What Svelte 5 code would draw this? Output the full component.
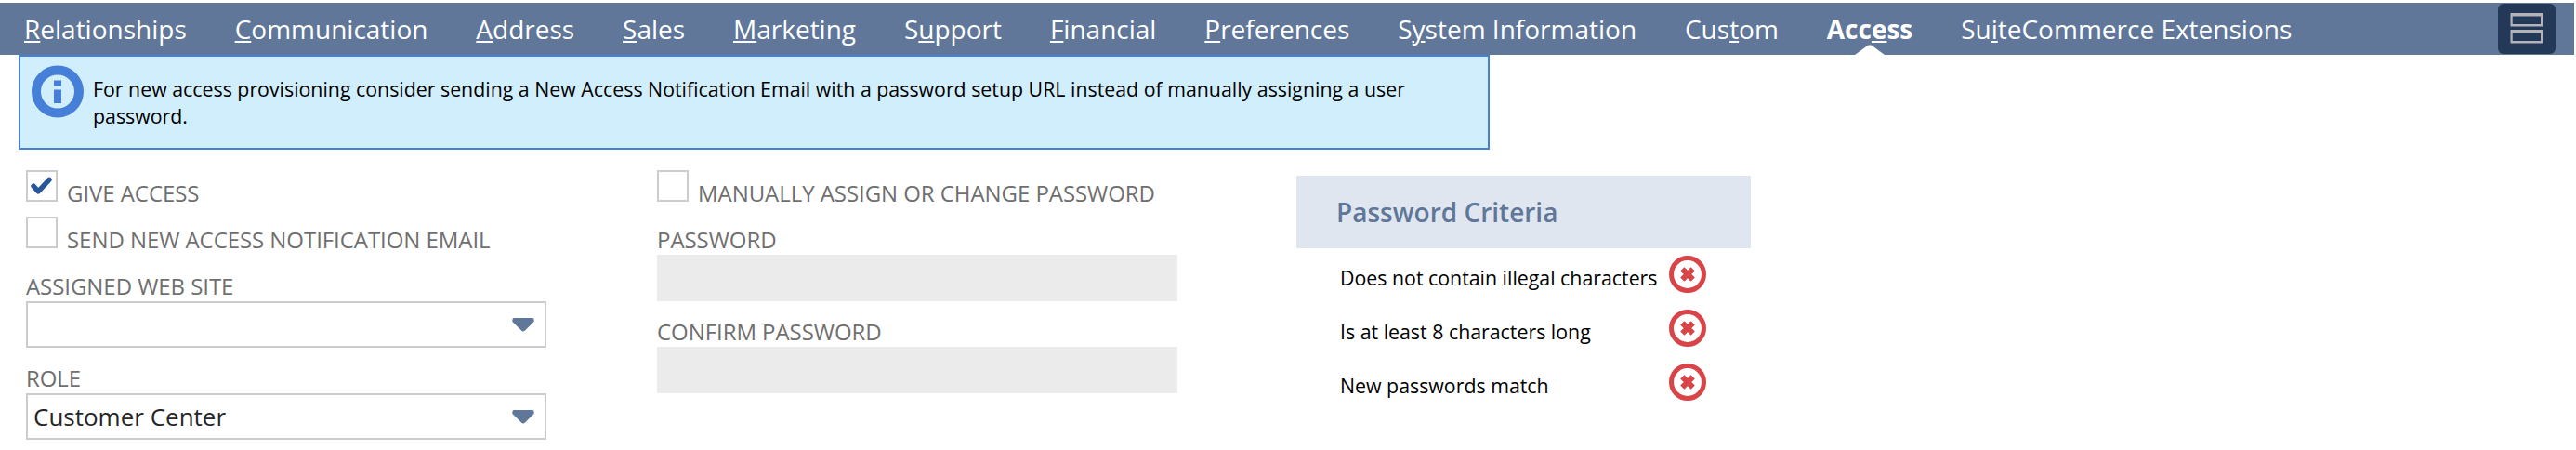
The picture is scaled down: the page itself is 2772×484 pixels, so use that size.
<script>
  // Each tab: text before the access key, the key, the rest
  const tabs = [
    ['', 'R', 'elationships'],
    ['', 'C', 'ommunication'],
    ['', 'A', 'ddress'],
    ['', 'S', 'ales'],
    ['', 'M', 'arketing'],
    ['S', 'u', 'pport'],
    ['', 'F', 'inancial'],
    ['', 'P', 'references'],
    ['S', 'y', 'stem Information'],
    ['Cus', 't', 'om'],
    ['Acc', 'e', 'ss'],
    ['Su', 'i', 'teCommerce Extensions']
  ];
  const active = 10;
  const criteria = [
    'Does not contain illegal characters',
    'Is at least 8 characters long',
    'New passwords match'
  ];
</script>

{#snippet checkbox(label, checked)}
  <div class="check-row">
    <span class="box">
      {#if checked}
        <svg width="30" height="30" viewBox="0 0 30 30">
          <path d="M6 15.200 11.200 20.800 23 8.300" fill="none" stroke="#27569b" stroke-width="5.400" stroke-linecap="round" stroke-linejoin="round" />
        </svg>
      {/if}
    </span>
    <span class="label">{label}</span>
  </div>
{/snippet}

{#snippet select(label, value)}
  <div class="field">
    <div class="label">{label}</div>
    <div class="select">
      <span>{value}</span>
      <svg width="24" height="15" viewBox="0 0 24 15">
        <path d="M1.6 0H22.4Q24 .4 23.6 4L14 13.6Q12 15.6 10 13.6L.4 4Q0 .4 1.6 0Z" fill="#607799" />
      </svg>
    </div>
  </div>
{/snippet}

<div class="page">
  <nav>
    <div class="tabs">
      {#each tabs as [before, key, after], i}
        <a class:active={i === active}>{before}<u>{key}</u>{after}</a>
      {/each}
    </div>
    <div class="toggle">
      <svg width="36" height="34" viewBox="0 0 36 34">
        <g fill="#b3b4b8" fill-rule="evenodd">
          <path d="M.5 1H35.500V15.500H.5ZM2.700 4.500V13H33V4.500Z" />
          <path d="M.5 19H35.500V33.500H.5ZM2.700 22.500V31H33V22.500Z" />
        </g>
      </svg>
    </div>
  </nav>

  <div class="notice">
    <svg width="56" height="57" viewBox="0 0 56 57">
      <circle cx="28" cy="28.5" r="23" fill="none" stroke="#467fd8" stroke-width="10" />
      <path d="M24 16.5h8v6h-8zM24 26.5h8v14.500h-8z" fill="#467fd8" />
    </svg>
    <p>For new access provisioning consider sending a New Access Notification Email with a password setup URL instead of manually assigning a user password.</p>
  </div>

  <div class="columns">
    <section class="col">
      {@render checkbox('GIVE ACCESS', true)}
      {@render checkbox('SEND NEW ACCESS NOTIFICATION EMAIL', false)}
      {@render select('ASSIGNED WEB SITE', '')}
      {@render select('ROLE', 'Customer Center')}
    </section>

    <section class="col second">
      {@render checkbox('MANUALLY ASSIGN OR CHANGE PASSWORD', false)}
      <div class="field">
        <div class="label">PASSWORD</div>
        <div class="input"></div>
      </div>
      <div class="field">
        <div class="label">CONFIRM PASSWORD</div>
        <div class="input"></div>
      </div>
    </section>

    <section class="criteria">
      <h2>Password Criteria</h2>
      {#each criteria as rule}
        <div class="rule">
          <span>{rule}</span>
          <svg width="40" height="40" viewBox="0 0 40 40">
            <circle cx="20" cy="20" r="17.500" fill="none" stroke="#d94448" stroke-width="5" />
            <path d="M14.300 14.300 25.700 25.700M25.700 14.300 14.300 25.700" stroke="#d94448" stroke-width="6" />
          </svg>
        </div>
      {/each}
    </section>
  </div>
</div>

<style>
  :global(body) {
    margin: 0;
    background: #fff;
  }
  .page {
    width: 2772px;
    height: 484px;
    overflow: hidden;
    padding-top: 3px;
    box-sizing: border-box;
    font-family: "Open Sans", "Noto Sans", sans-serif;
    background: #fff;
  }
  nav {
    display: flex;
    justify-content: space-between;
    width: 2770px;
    height: 56px;
    box-sizing: border-box;
    padding: 0 20px 0 26px;
    background: #607799;
  }
  .tabs {
    display: flex;
    gap: 51.9px;
  }
  nav a {
    position: relative;
    font-size: 28px;
    line-height: 56px;
    color: #fff;
    white-space: nowrap;
  }
  nav u {
    text-decoration-thickness: 2px;
    text-underline-offset: 2px;
  }
  nav a.active {
    font-weight: 700;
  }
  nav a.active::after {
    content: "";
    position: absolute;
    left: 50%;
    bottom: 0;
    width: 32px;
    height: 11px;
    margin-left: -16px;
    background: #fff;
    clip-path: polygon(0 100%, 45% 5%, 55% 5%, 100% 100%);
  }
  .toggle {
    display: flex;
    align-items: center;
    justify-content: center;
    width: 62px;
    height: 54px;
    margin-top: 1px;
    border-radius: 6px;
    background: #243858;
  }
  .toggle svg {
    margin-bottom: 2px;
  }
  .notice {
    display: flex;
    width: 1583px;
    height: 102px;
    box-sizing: border-box;
    margin-left: 20px;
    padding: 9px 12px;
    gap: 10px;
    border: 2px solid #467fd8;
    background: #d1eefc;
  }
  .notice svg {
    flex: none;
  }
  .notice p {
    width: 1440px;
    margin: 11px 0 0;
    font-size: 21.33px;
    line-height: 29px;
    color: #000;
  }
  .columns {
    display: flex;
    align-items: flex-start;
    padding: 22px 0 0 28px;
  }
  .col {
    width: 560px;
  }
  .second {
    margin-left: 119px;
  }
  .check-row {
    display: flex;
    gap: 10px;
    height: 50px;
  }
  .box {
    width: 34px;
    height: 34px;
    box-sizing: border-box;
    border: 2px solid #ccc;
  }
  .box svg {
    display: block;
  }
  .label {
    font-size: 24px;
    line-height: 33px;
    letter-spacing: -0.06px;
    color: #6f6f6f;
    white-space: nowrap;
  }
  .check-row .label {
    padding-top: 8px;
  }
  .field {
    padding-top: 8px;
    height: 91px;
  }
  .select,
  .input {
    height: 50px;
    box-sizing: border-box;
  }
  .select {
    display: flex;
    align-items: center;
    justify-content: space-between;
    padding: 0 11px 0 6px;
    border: 2px solid #ccc;
    font-size: 26px;
    line-height: 46px;
    color: #262626;
  }
  .input {
    background: #ebebeb;
  }
  .criteria {
    width: 489px;
    margin: 6px 0 0 128px;
  }
  h2 {
    margin: 0;
    padding-left: 43px;
    height: 78px;
    font-size: 28px;
    font-weight: 600;
    line-height: 78px;
    color: #607799;
    background: #dfe6ef;
  }
  .rule {
    display: flex;
    justify-content: space-between;
    height: 50px;
    padding: 8px 48px 0 47px;
    font-size: 21.33px;
    line-height: 48px;
    color: #000;
  }
  .rule span {
    white-space: nowrap;
  }
</style>
